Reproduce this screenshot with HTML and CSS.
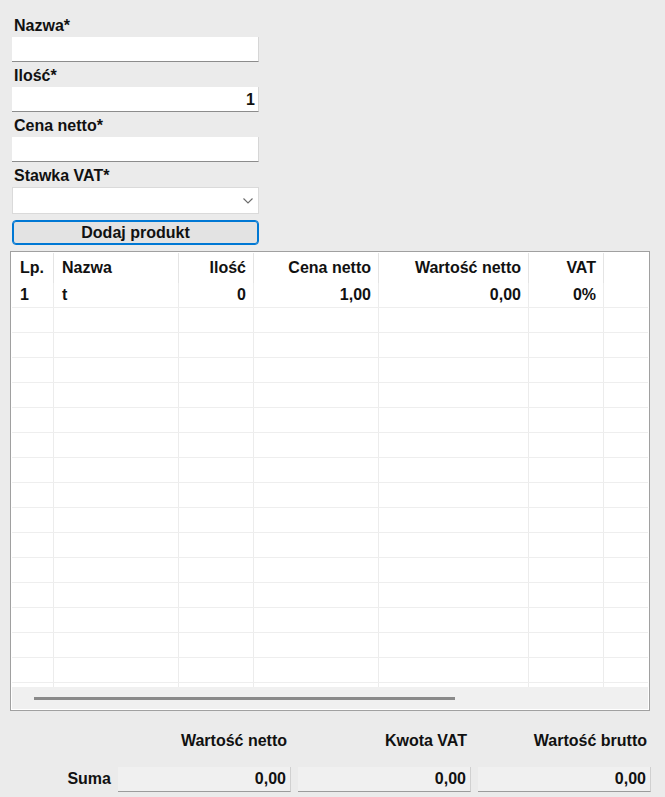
FILE: index.html
```html
<!DOCTYPE html>
<html lang="pl">
<head>
<meta charset="utf-8">
<title>Produkty</title>
<link rel="stylesheet" href="styles.css">
</head>
<body>
<div class="form">
  <div class="lbl">Nazwa*</div>
  <div class="field"></div>
  <div class="lbl">Ilość*</div>
  <div class="field num">1</div>
  <div class="lbl">Cena netto*</div>
  <div class="field"></div>
  <div class="lbl">Stawka VAT*</div>
  <div class="select">
    <svg class="chev" width="10" height="6" viewBox="0 0 10 6"><polyline points="0.5,0.5 5,5 9.5,0.5" fill="none" stroke="#6b6b6b" stroke-width="1.1"/></svg>
  </div>
  <button class="btn">Dodaj produkt</button>
</div>

<div class="grid">
  <div class="row head">
    <div class="c l">Lp.</div><div class="c l">Nazwa</div><div class="c r">Ilość</div><div class="c r">Cena netto</div><div class="c r">Wartość netto</div><div class="c r">VAT</div><div class="c last"></div>
  </div>
  <div class="body">
    <div class="row"><div class="c l">1</div><div class="c l">t</div><div class="c r">0</div><div class="c r">1,00</div><div class="c r">0,00</div><div class="c r">0%</div><div class="c last"></div></div>
    <div class="row"><div class="c"></div><div class="c"></div><div class="c"></div><div class="c"></div><div class="c"></div><div class="c"></div><div class="c last"></div></div>
    <div class="row"><div class="c"></div><div class="c"></div><div class="c"></div><div class="c"></div><div class="c"></div><div class="c"></div><div class="c last"></div></div>
    <div class="row"><div class="c"></div><div class="c"></div><div class="c"></div><div class="c"></div><div class="c"></div><div class="c"></div><div class="c last"></div></div>
    <div class="row"><div class="c"></div><div class="c"></div><div class="c"></div><div class="c"></div><div class="c"></div><div class="c"></div><div class="c last"></div></div>
    <div class="row"><div class="c"></div><div class="c"></div><div class="c"></div><div class="c"></div><div class="c"></div><div class="c"></div><div class="c last"></div></div>
    <div class="row"><div class="c"></div><div class="c"></div><div class="c"></div><div class="c"></div><div class="c"></div><div class="c"></div><div class="c last"></div></div>
    <div class="row"><div class="c"></div><div class="c"></div><div class="c"></div><div class="c"></div><div class="c"></div><div class="c"></div><div class="c last"></div></div>
    <div class="row"><div class="c"></div><div class="c"></div><div class="c"></div><div class="c"></div><div class="c"></div><div class="c"></div><div class="c last"></div></div>
    <div class="row"><div class="c"></div><div class="c"></div><div class="c"></div><div class="c"></div><div class="c"></div><div class="c"></div><div class="c last"></div></div>
    <div class="row"><div class="c"></div><div class="c"></div><div class="c"></div><div class="c"></div><div class="c"></div><div class="c"></div><div class="c last"></div></div>
    <div class="row"><div class="c"></div><div class="c"></div><div class="c"></div><div class="c"></div><div class="c"></div><div class="c"></div><div class="c last"></div></div>
    <div class="row"><div class="c"></div><div class="c"></div><div class="c"></div><div class="c"></div><div class="c"></div><div class="c"></div><div class="c last"></div></div>
    <div class="row"><div class="c"></div><div class="c"></div><div class="c"></div><div class="c"></div><div class="c"></div><div class="c"></div><div class="c last"></div></div>
    <div class="row"><div class="c"></div><div class="c"></div><div class="c"></div><div class="c"></div><div class="c"></div><div class="c"></div><div class="c last"></div></div>
    <div class="row"><div class="c"></div><div class="c"></div><div class="c"></div><div class="c"></div><div class="c"></div><div class="c"></div><div class="c last"></div></div>
    <div class="row"><div class="c"></div><div class="c"></div><div class="c"></div><div class="c"></div><div class="c"></div><div class="c"></div><div class="c last"></div></div>
  </div>
  <div class="hscroll"><div class="thumb"></div></div>
</div>

<div class="summary">
  <div></div>
  <div class="sh">Wartość netto</div>
  <div class="sh">Kwota VAT</div>
  <div class="sh">Wartość brutto</div>
  <div class="slbl">Suma</div>
  <div class="sbox">0,00</div>
  <div class="sbox">0,00</div>
  <div class="sbox">0,00</div>
</div>
</body>
</html>
```

FILE: styles.css
```css
* { box-sizing: border-box; }
html, body { margin: 0; }
body {
  background: #ebebeb;
  font-family: "Liberation Sans", Arial, sans-serif;
  font-weight: bold;
  font-size: 16px;
  color: #111;
  padding: 12px 0 0 10px;
  width: 665px;
  height: 797px;
  overflow: hidden;
}
.form {
  margin-left: 2px;
  width: 247px;
  display: flex;
  flex-direction: column;
}
.lbl {
  height: 25px;
  line-height: 18px;
  padding: 5px 0 0 2px;
  white-space: nowrap;
}
.field {
  height: 25px;
  background: #fff;
  border-bottom: 1px solid #8c8c8c;
  border-right: 1px solid #d6d6d6;
  line-height: 18px;
  padding: 4px 3px 0 3px;
}
.field.num { text-align: right; }
.select {
  height: 27px;
  background: #fff;
  border: 1px solid #dadada;
  display: flex;
  align-items: center;
  justify-content: flex-end;
  padding-right: 5px;
}
.chev { display: block; }
.btn {
  margin-top: 6px;
  height: 25px;
  width: 247px;
  border: 1px solid #0078d4;
  box-shadow: inset 0 0 0 1px #0078d4;
  border-radius: 4px;
  background: #e3e3e3;
  font: inherit;
  color: #111;
  padding: 0;
  line-height: 18px;
}
.grid {
  margin-top: 6px;
  width: 640px;
  height: 460px;
  border: 1px solid #a0a0a0;
  padding: 1px;
  background: #fff;
  display: flex;
  flex-direction: column;
}
.row {
  display: grid;
  grid-template-columns: 42px 125px 75px 125px 150px 75px 1fr;
  height: 25px;
  border-bottom: 1px solid #eeeeee;
}
.row.head {
  height: 30px;
  border-bottom: none;
}
.c {
  border-right: 1px solid #ececec;
  padding: 0 7px 0 8px;
  line-height: 24px;
  white-space: nowrap;
  overflow: hidden;
}
.head .c {
  line-height: 30px;
  border-right-color: #e4e4e4;
}
.c.r { text-align: right; }
.c.last { border-right: none; }
.body {
  height: 404px;
  overflow: hidden;
}
.hscroll {
  height: 22px;
  background: #f0f0f0;
  display: flex;
  align-items: center;
  padding-left: 22px;
}
.thumb {
  width: 421px;
  height: 3px;
  background: #8a8a8a;
}
.summary {
  margin-top: 21px;
  margin-left: 2px;
  display: grid;
  grid-template-columns: 99px 173px 173px 173px;
  column-gap: 7px;
  row-gap: 17px;
}
.sh {
  text-align: right;
  line-height: 18px;
  padding-right: 4px;
  white-space: nowrap;
}
.slbl {
  text-align: right;
  line-height: 18px;
  padding-top: 3px;
}
.sbox {
  height: 25px;
  background: #f0f0f0;
  border-bottom: 1px solid #9c9c9c;
  border-right: 1px solid #d0d0d0;
  text-align: right;
  line-height: 18px;
  padding: 3px 4px 0 0;
}
```
